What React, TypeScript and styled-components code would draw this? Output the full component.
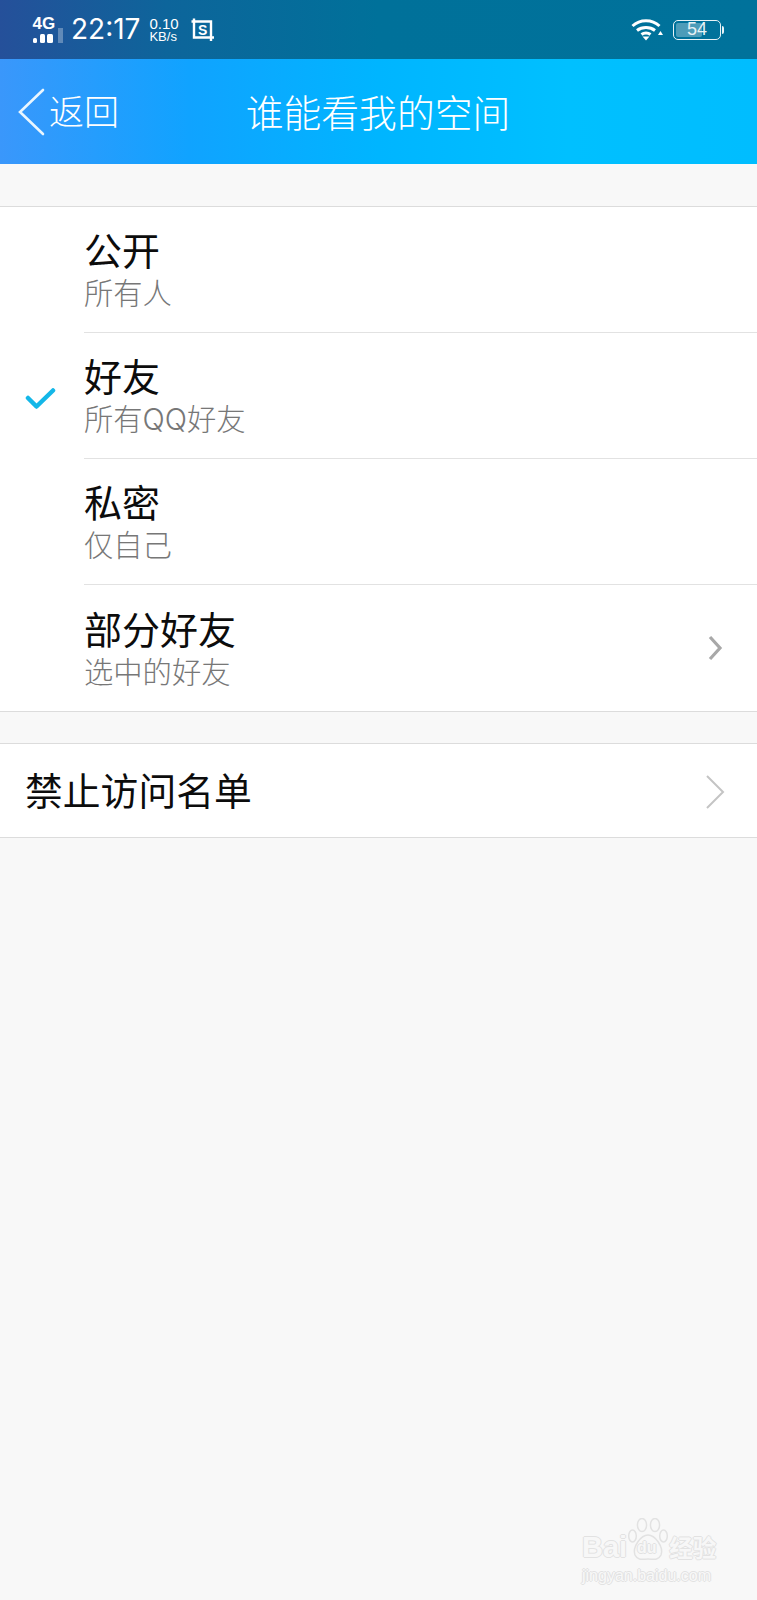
import React from "react";
import styled, { createGlobalStyle } from "styled-components";

const Global = createGlobalStyle`
  html, body { margin: 0; padding: 0; background: #f8f8f8; }
  body { font-family: "Noto Sans CJK SC", "Liberation Sans", sans-serif; }
`;

const Page = styled.div`
  position: relative;
  width: 757px;
  height: 1600px;
  overflow: hidden;
  background: #f8f8f8;
`;

const StatusBar = styled.div`
  height: 59px;
  display: flex;
  align-items: center;
  padding: 0 33px 0 32px;
  box-sizing: border-box;
  color: #fff;
  background: linear-gradient(90deg, #25509a 0%, #0d659b 22%, #00719a 50%, #00729b 100%);
  font-family: "Liberation Sans", sans-serif;
`;

const Clock = styled.span`
  font-family: "Inter", "Liberation Sans", sans-serif;
  font-size: 28px;
  margin-left: 7px;
  line-height: 59px;
`;

const Speed = styled.div`
  display: flex;
  flex-direction: column;
  align-items: flex-start;
  margin-left: 9px;
  margin-top: 1px;
`;

const SpeedValue = styled.span`
  font-size: 15px;
  line-height: 14px;
`;

const SpeedUnit = styled.span`
  font-size: 13px;
  line-height: 12px;
`;

const ShotIcon = styled.svg`
  width: 24px;
  height: 24px;
  margin-left: 12px;
`;

const Spacer = styled.div`
  flex: 1;
`;

const BatteryWrap = styled.div`
  position: relative;
  width: 48px;
  height: 20px;
  margin-left: 9px;
  margin-right: 1px;
  box-sizing: border-box;
  border: 1.5px solid #e8f2f6;
  border-radius: 5px;
  display: flex;
  align-items: center;
  justify-content: center;
  font-size: 18px;
`;

const BatteryFill = styled.div`
  position: absolute;
  left: 2px;
  top: 2px;
  bottom: 2px;
  border-radius: 2px;
  background: rgba(255, 255, 255, 0.3);
`;

const BatteryValue = styled.span`
  position: relative;
  color: #e6f2f6;
`;

const BatteryCap = styled.div`
  width: 2px;
  height: 8px;
  background: #e8f2f6;
  border-radius: 0 2px 2px 0;
`;

const NavBar = styled.div`
  position: relative;
  height: 105px;
  display: flex;
  align-items: center;
  justify-content: center;
  color: #fff;
  background: linear-gradient(90deg, #3a97fb 0%, #10a3ff 25%, #00b5ff 50%, #00c0ff 75%, #00bdff 100%);
`;

const Back = styled.div`
  position: absolute;
  left: 17px;
  top: 0;
  height: 105px;
  display: flex;
  align-items: center;
  font-size: 35px;
  font-weight: 300;
`;

const BackLabel = styled.span`
  margin-left: 4px;
  margin-top: -4px;
`;

const NavTitle = styled.div`
  font-size: 37.8px;
  font-weight: 300;
  margin: -3px 1px 0 0;
`;

const Group = styled.div`
  background: #fff;
  border-top: 1px solid #dcdcdc;
  border-bottom: 1px solid #dcdcdc;
  margin-top: ${(p: { $gap: number }) => p.$gap}px;
`;

const Option = styled.div<{ $first?: boolean; $height: number }>`
  position: relative;
  height: ${(p) => p.$height}px;
  margin-left: 84px;
  display: flex;
  align-items: center;
  box-sizing: border-box;
  border-top: ${(p) => (p.$first ? "none" : "1px solid #e2e2e2")};
`;

const OptionText = styled.div`
  display: flex;
  flex-direction: column;
`;

const OptionTitle = styled.div`
  font-size: 38px;
  line-height: 44px;
  margin-bottom: 5px;
  color: #0c0c0c;
`;

const OptionSub = styled.div`
  font-family: "Inter", "Noto Sans CJK SC", sans-serif;
  font-size: 29.3px;
  line-height: 36px;
  color: #777;
  font-weight: 300;
`;

const Check = styled.svg`
  position: absolute;
  left: -59px;
  top: 50%;
  width: 31px;
  height: 24px;
  margin-top: -9px;
`;

const SmallChevron = styled.svg`
  position: absolute;
  right: 34px;
  top: 50%;
  width: 16px;
  height: 26px;
  margin-top: -13px;
`;

const LinkRow = styled.div`
  position: relative;
  height: 93px;
  box-sizing: border-box;
  padding: 0 0 4px 25px;
  display: flex;
  align-items: center;
  font-size: 37.8px;
  color: #0c0c0c;
`;

const LargeChevron = styled.svg`
  position: absolute;
  right: 32px;
  top: 50%;
  width: 20px;
  height: 36px;
  margin-top: -17px;
`;

const Watermark = styled.div`
  position: absolute;
  left: 582px;
  top: 1518px;
  width: 135px;
  color: #f7f7f7;
  font-family: "Liberation Sans", sans-serif;
  text-shadow: -1px 0 #e2e2e2, 1px 0 #e2e2e2, 0 -1px #e2e2e2, 0 1px #e2e2e2;
`;

const WaterTop = styled.div`
  display: flex;
  align-items: flex-end;
  height: 44px;
  font-size: 29px;
  font-weight: 700;
  line-height: 30px;
`;

const WaterCjk = styled.span`
  font-family: "Noto Sans CJK SC", sans-serif;
  font-size: 23.5px;
  line-height: 30px;
  margin-left: 42px;
`;

const Paw = styled.svg`
  position: absolute;
  left: 46px;
  top: 0;
  width: 40px;
  height: 44px;
`;

const PawLabel = styled.span`
  position: absolute;
  left: 55px;
  top: 21px;
  font-size: 16px;
  line-height: 18px;
  font-weight: 700;
`;

const WaterUrl = styled.div`
  font-size: 16px;
  line-height: 18px;
  margin-top: 5px;
  color: #f8f8f8;
`;

const options = [
  { title: "公开", sub: "所有人", height: 125 },
  { title: "好友", sub: "所有QQ好友", checked: true, height: 126 },
  { title: "私密", sub: "仅自己", height: 126 },
  { title: "部分好友", sub: "选中的好友", more: true, height: 127 },
];

export default function App() {
  return (
    <Page>
      <Global />
      <StatusBar>
        <svg width="32" height="39" viewBox="0 -8 32 39">
          <text x="0.5" y="11" fontFamily="Liberation Sans" fontWeight="700" fontSize="17" fill="#fff">4G</text>
          <rect x="1" y="20" width="4" height="5" rx="1.5" fill="#fff" />
          <rect x="8" y="16" width="5" height="9" rx="1.5" fill="#fff" />
          <rect x="15" y="16" width="6" height="9" rx="1.5" fill="#fff" />
          <rect x="26" y="10" width="5" height="15" fill="#fff" opacity="0.3" />
        </svg>
        <Clock>22:17</Clock>
        <Speed>
          <SpeedValue>0.10</SpeedValue>
          <SpeedUnit>KB/s</SpeedUnit>
        </Speed>
        <ShotIcon viewBox="0 0 24 24" fill="none" stroke="#fff">
          <path d="M3 0.5V19.5H23" strokeWidth="2.4" />
          <path d="M0.5 3.5H20V23" strokeWidth="2.4" />
          <text x="7" y="16.5" fontFamily="Liberation Sans" fontWeight="700" fontSize="14" fill="#fff" stroke="none">S</text>
        </ShotIcon>
        <Spacer />
        <svg width="33" height="24" viewBox="0 0 33 24" fill="none" stroke="#fff" strokeWidth="3">
          <path d="M1.5 8C9 1 21 1 28.5 8" />
          <path d="M6 12.5C11 8.5 19 8.5 24 12.5" />
          <path d="M10.5 16.5C13 14.5 17 14.5 19.5 16.5" />
          <path d="M11.5 18.5L15 22.5L18.5 18.5Z" fill="#fff" stroke="none" />
          <path d="M27 17L32 17L29.5 13Z" fill="#fff" stroke="none" />
        </svg>
        <BatteryWrap>
          <BatteryFill style={{ width: `${54 * 0.48}px` }} />
          <BatteryValue>54</BatteryValue>
        </BatteryWrap>
        <BatteryCap />
      </StatusBar>
      <NavBar>
        <Back>
          <svg width="28" height="48" viewBox="0 0 28 48" fill="none" stroke="#e9f6ff" strokeWidth="2.6" strokeLinecap="round">
            <path d="M26 2L3 24L26 46" />
          </svg>
          <BackLabel>返回</BackLabel>
        </Back>
        <NavTitle>谁能看我的空间</NavTitle>
      </NavBar>
      <Group $gap={42}>
        {options.map((o, i) => (
          <Option key={o.title} $first={i === 0} $height={o.height}>
            {o.checked && (
              <Check viewBox="0 0 31 24" fill="none" stroke="#14b7e8" strokeWidth="4.5" strokeLinecap="round" strokeLinejoin="round">
                <path d="M3 11L11.5 19.5L28 3.5" />
              </Check>
            )}
            <OptionText>
              <OptionTitle>{o.title}</OptionTitle>
              <OptionSub>{o.sub}</OptionSub>
            </OptionText>
            {o.more && (
              <SmallChevron viewBox="0 0 16 26" fill="none" stroke="#a8a8a8" strokeWidth="3.2">
                <path d="M3 2L13 13L3 24" />
              </SmallChevron>
            )}
          </Option>
        ))}
      </Group>
      <Group $gap={31}>
        <LinkRow>
          禁止访问名单
          <LargeChevron viewBox="0 0 20 36" fill="none" stroke="#c4c4c4" strokeWidth="2">
            <path d="M2 2L18 18L2 34" />
          </LargeChevron>
        </LinkRow>
      </Group>
      <Watermark>
        <Paw viewBox="0 0 40 44" fill="#f8f8f8" stroke="#e2e2e2" strokeWidth="1.5">
          <ellipse cx="4.5" cy="18" rx="3.8" ry="6" />
          <ellipse cx="14" cy="7" rx="4.6" ry="6.5" />
          <ellipse cx="27" cy="7" rx="4.6" ry="6.5" />
          <ellipse cx="35.5" cy="18" rx="3.8" ry="6" />
          <path d="M20 17C27 17 36 29 33 37C30 43 25 41 20 41C15 41 10 43 7 37C4 29 13 17 20 17Z" />
        </Paw>
        <PawLabel>du</PawLabel>
        <WaterTop>
          Bai
          <WaterCjk>经验</WaterCjk>
        </WaterTop>
        <WaterUrl>jingyan.baidu.com</WaterUrl>
      </Watermark>
    </Page>
  );
}
